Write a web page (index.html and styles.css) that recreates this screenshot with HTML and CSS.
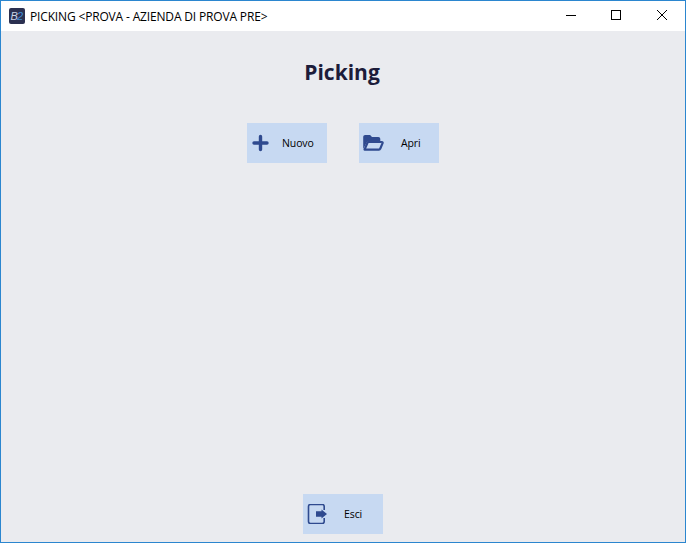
FILE: index.html
```html
<!DOCTYPE html>
<html lang="it">
<head>
<meta charset="utf-8">
<title>Picking</title>
<link rel="stylesheet" href="styles.css">
</head>
<body>
<div class="window">
  <header class="titlebar">
    <svg class="app-icon" width="16" height="16" viewBox="0 0 16 16">
      <rect width="16" height="16" rx="2" fill="#2b3050"/>
      <text x="1.5" y="12" class="logo-a">B</text>
      <text x="8" y="12" class="logo-b">2</text>
    </svg>
    <span class="title-text">PICKING &lt;PROVA - AZIENDA DI PROVA PRE&gt;</span>
    <div class="controls">
      <svg class="ctl" width="46" height="30" viewBox="0 0 46 30"><path d="M19 14.5h10" stroke="#000" fill="none"/></svg>
      <svg class="ctl" width="46" height="30" viewBox="0 0 46 30"><rect x="18.5" y="9.5" width="9" height="9" stroke="#000" fill="none"/></svg>
      <svg class="ctl" width="46" height="30" viewBox="0 0 46 30"><path d="M18 9l10 10M28 9l-10 10" stroke="#000" fill="none"/></svg>
    </div>
  </header>
  <main class="content">
    <h1 class="heading">Picking</h1>
    <div class="actions">
      <button class="btn">
        <svg class="icon" width="20" height="20" viewBox="0 0 20 20"><path d="M9.5 3.5v13M3 10h13" stroke="#2f4a8f" stroke-width="3.4" stroke-linecap="round" fill="none"/></svg>
        <span class="label label-nuovo">Nuovo</span>
      </button>
      <button class="btn">
        <svg class="icon" width="21" height="20" viewBox="0 0 21 20"><path d="M.2 4.2c0-1.2.8-2.1 2-2.1h4.9l1.9 2h6.3c1.2 0 2 .8 2 2v2.4H5.4c-.8 0-1.4.4-1.7 1.1L.2 16z" fill="#2f4a8f"/><path d="M1.5 16.6l3-6.9c.2-.5.6-.7 1.1-.7h13.2c.7 0 1 .5.8 1.1l-2.4 5.6c-.2.6-.7.9-1.3.9z" stroke="#2f4a8f" stroke-width="2.2" stroke-linejoin="round" fill="none"/></svg>
        <span class="label label-apri">Apri</span>
      </button>
    </div>
    <div class="spacer"></div>
    <button class="btn">
      <svg class="icon" width="21" height="20" viewBox="0 0 21 20"><path d="M17.2 6V2.4c0-1.2-.7-1.9-1.9-1.9H3.4c-1.2 0-1.9.7-1.9 1.9v15.2c0 1.2.7 1.9 1.9 1.9h11.9c1.2 0 1.9-.7 1.9-1.9V14" stroke="#2f4a8f" stroke-width="1.6" fill="none"/><path d="M9 7.2h5.5V5.5l5.5 4.5-5.5 4.5v-1.7H9z" fill="#2f4a8f"/></svg>
      <span class="label label-esci">Esci</span>
    </button>
  </main>
</div>
</body>
</html>
```

FILE: styles.css
```css
* {
  box-sizing: border-box;
}

html,
body {
  margin: 0;
  padding: 0;
  height: 100%;
}

body {
  font-family: "Open Sans", "Noto Sans", "Liberation Sans", sans-serif;
  overflow: hidden;
}

.window {
  width: 686px;
  height: 543px;
  display: flex;
  flex-direction: column;
  border: 1px solid #2b86cf;
  background: #eaebef;
}

.titlebar {
  height: 30px;
  flex: none;
  display: flex;
  align-items: center;
  background: #fff;
  padding-left: 8px;
}

.app-icon {
  flex: none;
}

.logo-a,
.logo-b {
  font-family: "Liberation Sans", sans-serif;
  font-size: 11px;
  font-style: italic;
}

.logo-a {
  fill: #c9d2e4;
}

.logo-b {
  fill: #3f8fd8;
}

.title-text {
  margin-left: 5px;
  font-size: 12px;
  letter-spacing: -0.16px;
  color: #000;
  white-space: nowrap;
}

.controls {
  margin-left: auto;
  display: flex;
}

.ctl {
  display: block;
}

.content {
  flex: 1;
  display: flex;
  flex-direction: column;
  align-items: center;
  padding: 0 0 8px;
}

.heading {
  margin: 26px 2px 0 0;
  height: 30px;
  font-size: 21px;
  line-height: 30px;
  font-weight: 700;
  color: #1c1c3a;
}

.actions {
  margin-top: 36px;
  display: flex;
  gap: 32px;
}

.spacer {
  flex: 1;
}

.btn {
  position: relative;
  width: 80px;
  height: 40px;
  padding: 0 0 0 4px;
  border: 0;
  display: flex;
  align-items: center;
  background: #c7d9f2;
  font-family: inherit;
}

.icon {
  flex: none;
}

.label {
  font-size: 10.5px;
  letter-spacing: -0.1px;
  color: #000;
}

.label-nuovo {
  margin-left: 11px;
}

.label-apri {
  margin-left: 17px;
}

.label-esci {
  margin-left: 16px;
}
```
